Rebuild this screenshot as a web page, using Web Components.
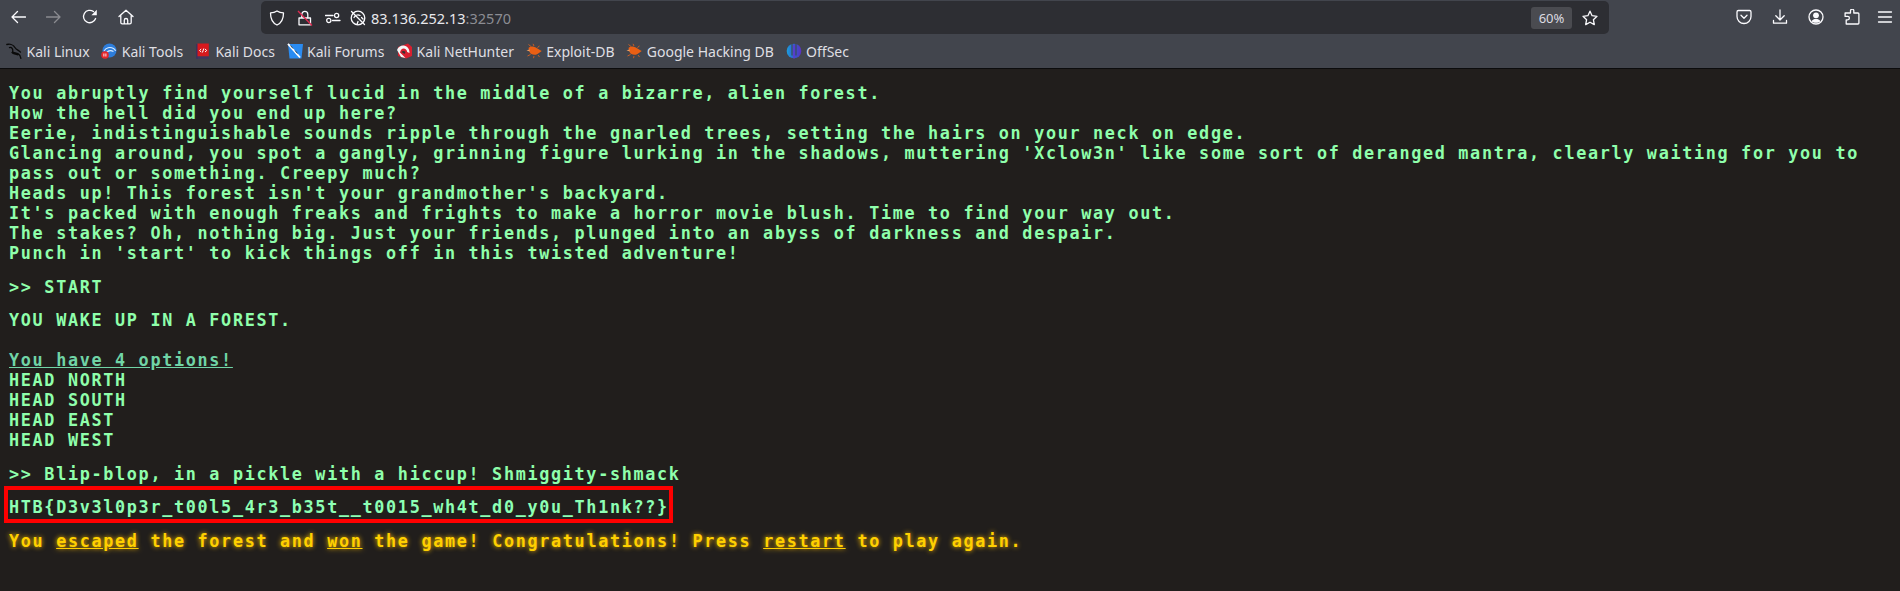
<!DOCTYPE html>
<html><head><meta charset="utf-8"><style>
html,body{margin:0;padding:0;background:#211e1c;height:100%;overflow:hidden}
body{display:flex;flex-direction:column;width:1900px;height:591px}
</style></head><body>
<browser-chrome></browser-chrome>
<game-terminal>
<term-block>You abruptly find yourself lucid in the middle of a bizarre, alien forest.<br>How the hell did you end up here?<br>Eerie, indistinguishable sounds ripple through the gnarled trees, setting the hairs on your neck on edge.<br>Glancing around, you spot a gangly, grinning figure lurking in the shadows, muttering 'Xclow3n' like some sort of deranged mantra, clearly waiting for you to pass out or something. Creepy much?<br>Heads up! This forest isn't your grandmother's backyard.<br>It's packed with enough freaks and frights to make a horror movie blush. Time to find your way out.<br>The stakes? Oh, nothing big. Just your friends, plunged into an abyss of darkness and despair.<br>Punch in 'start' to kick things off in this twisted adventure!</term-block>
<term-block style="margin-top:14px">&gt;&gt; START</term-block>
<term-block style="margin-top:13px">YOU WAKE UP IN A FOREST.</term-block>
<term-block style="margin-top:20px"><u style="color:#70d4a6">You have 4 options!</u><br>HEAD NORTH<br>HEAD SOUTH<br>HEAD EAST<br>HEAD WEST</term-block>
<term-block style="margin-top:14px">&gt;&gt; Blip-blop, in a pickle with a hiccup! Shmiggity-shmack</term-block>
<flag-box>HTB{D3v3l0p3r_t00l5_4r3_b35t__t0015_wh4t_d0_y0u_Th1nk??}</flag-box>
<term-block tone="win" style="margin-top:8px">You <u>escaped</u> the forest and <u>won</u> the game! Congratulations! Press <u>restart</u> to play again.</term-block>
</game-terminal>
<script>
const def=(name,html)=>customElements.define(name,class extends HTMLElement{constructor(){super();this.attachShadow({mode:'open'}).innerHTML=html(this);}});
const S='fill="none" stroke="currentColor" stroke-width="1.3" stroke-linecap="round" stroke-linejoin="round"';
const ICONS={
back:`<path ${S} d="M15.5 8H2M7.5 2.5 2 8l5.5 5.5"/>`,
forward:`<path ${S} d="M.5 8H14M8.5 2.5 14 8l-5.5 5.5"/>`,
reload:`<path ${S} d="M13.6 9.5A6.2 6.2 0 1 1 11.5 2.6"/><path fill="currentColor" d="M14.8.8v5.4H9.4z"/>`,
home:`<path ${S} d="M1 7.6 8 1.2l7 6.4M2.8 6.4v7c0 .9.6 1.400 1.400 1.400h7.600c.8 0 1.400-.5 1.400-1.400v-7M6.300 14.600v-3.400c0-1 .7-1.700 1.700-1.700s1.700.7 1.700 1.700v3.400"/>`,
shield:`<path ${S} d="M8 1C6 2.300 4 2.800 1.500 2.900c0 5.500 1.700 9.800 6.500 12.100 4.800-2.300 6.500-6.600 6.500-12.100C12 2.800 10 2.300 8 1z"/>`,
lock:`<path ${S} d="M2 8h11.500v6.800H2zM4.800 8V4.400A3 3 0 0 1 10.800 4.400V8"/><path stroke="#e22850" stroke-width="1.300" d="M1 1 15 15.500"/>`,
perm:`<path ${S} stroke-width="1.100" d="M.5 5.500H8M7.500 10.500H15"/><circle cx="11.600" cy="5.500" r="2.100" ${S} stroke-width="1.100"/><circle cx="3.800" cy="10.500" r="2.100" ${S} stroke-width="1.100"/>`,
track:`<circle cx="8" cy="8" r="6.800" ${S} stroke-width="1.200"/><path ${S} stroke-width="1.200" d="M1.500 1.500 14.500 14.500M4 7.500C5 5.500 7.500 4.300 10 5.500M8 11.500 7 14.500M11.500 7.500 13 9"/>`,
star:`<path ${S} d="m8 1.200 2.100 4.500 4.900.600-3.600 3.400.9 4.900L8 12.200l-4.300 2.400.9-4.900L1 6.300l4.900-.600z"/>`,
pocket:`<path ${S} d="M2.400 1.500h11.200c.8 0 1.400.6 1.400 1.400v4.600A7 7 0 0 1 1 7.500V2.900c0-.8.6-1.400 1.400-1.400z"/><path ${S} d="M5 6.300 8 9.200l3-2.900"/>`,
download:`<path ${S} d="M8 1v9.800M3.800 6.800 8 11l4.200-4.200M1.500 11.500v2.700h13v-2.700"/>`,
account:`<circle cx="8" cy="8" r="7" ${S}/><circle cx="8" cy="6.300" r="2.900" fill="currentColor"/><path fill="currentColor" d="M3.500 12.300c1-1.700 2.600-2.300 4.500-2.300s3.500.6 4.500 2.300c-2.400 2-6.600 2-9 0z"/>`,
ext:`<path ${S} d="M6.500 1.500a1.700 1.700 0 0 1 3.300 0V4h4.200c.5 0 .9.400.9.900v9.200c0 .5-.4.900-.9.900H2.200v-4.200h1.500a1.700 1.700 0 0 0 0-3.400H1.100V4h5.400z"/>`,
menu:`<path ${S} d="M1.500 3h13M1.500 8h13M1.500 13h13"/>`,
kali:`<path fill="none" stroke="#0a0a0a" stroke-width="1.300" stroke-linecap="round" d="M.8 1.500c3.200-.9 6.800.5 8.300 3.300 1 1.800 3.800 2.500 5.400 4.300M3.500 4.600c2.300-.8 3.600 1.800 3.200 3.500-.4 1.800 3.200 1.500 5.200 2.500 1.800 1 2.800 3 3 4.700M6 9.500c1 1.700 3.500 1.400 5.500 2.300"/>`,
tools:`<circle cx="8.500" cy="7.500" r="7" fill="#2d7ddb"/><path fill="none" stroke="#d9ecff" stroke-width="1.100" d="M3 8c2-3.500 6-4.500 9.500-2.500 1 .6 1.800 1.500 2 2.500M5.500 9.500c2-2 4.500-2.300 7-1"/><circle cx="4" cy="12" r="3.800" fill="#e5262a"/><path stroke="#fff" stroke-width=".9" d="M2.900 10.500v3M4.900 10.500v3"/>`,
docs:`<path fill="#3a2f62" d="M1.200 1h2v14.800h-2z"/><path fill="#d7191d" d="M2.500.5h11.300v13H2.500z"/><path fill="#43365f" d="M2.500 13.500h11.300v2.300H2.500z"/><path fill="none" stroke="#fff" stroke-width="1" d="M6.200 6 4.500 7.500 6.200 9M10 6l1.700 1.500L10 9M8.800 5.500 7.400 9.500"/>`,
forums:`<path fill="#2a8cf2" d="M1 1h15l-1.500 14.500H2.500z"/><path fill="none" stroke="#fff" stroke-width="1.800" d="M1 .8 13 14.500"/><path fill="none" stroke="#0d2233" stroke-width=".8" d="M3.500 2.500 6 5.500M8 7.500l2.500 3"/>`,
hunter:`<path fill="#d81f2f" d="M2 4 12 .5l4 3.500v9l-6 2.500L2 13z"/><path fill="#f5f5f5" d="M1 7c1.500-4 6-5.500 9.500-3.500 2.200 1.300 3 4 3 6.500l-2.300-1c-.3-2-1.700-3.500-3.700-3.500C6 5.500 4.500 7 4 9.500L9.500 15 5 14z"/><path fill="#333" d="M5.500 9c1-1.500 3-1.300 4 0l-1 2z"/>`,
bug:`<g stroke="#e9631c" stroke-width=".8" fill="none"><path d="M5 3.500 2.500 1.500M8 3 7 .8M4.500 11.500 1.500 13M8 13l-.5 2.200M12 12l1.500 2M11.500 4.500l2-1.500"/></g><path fill="#ea5f14" d="M2.500 5c1.200-1.600 4.600-2 6.800-.8 2.300 1.200 4.700 2.800 6.400 3.900-1.700.9-3.600 3.200-5.800 3.600-2.800.5-5.500-.5-6.300-2.600z"/><path fill="#f7a363" d="M.5 7.200 3.500 6.600l.3 1.800z"/>`,
offsec:`<defs><linearGradient id="o" x1="0" x2="1" y1="0" y2="0"><stop offset="0" stop-color="#1aa0df"/><stop offset=".5" stop-color="#2f5fcb"/><stop offset="1" stop-color="#5d2fc4"/></linearGradient></defs><circle cx="8" cy="8" r="7.300" fill="url(#o)"/><path stroke="#42454d" stroke-width="1.100" d="M6 .5v12M10 .5v12"/><path stroke="#6a2fd0" stroke-width="1.300" d="M8 2v13.500"/>`
};
const ic=(n,c='#fbfbfe',sz=16)=>`<svg width="${sz}" height="${sz}" viewBox="0 0 16 16" style="display:block;flex:none;color:${c}">${ICONS[n]}</svg>`;

def('tool-btn',h=>`<style>:host{display:flex;align-items:center;justify-content:center;width:${h.getAttribute('w')||36}px;height:34px;flex:none}</style>${ic(h.getAttribute('icon'),h.getAttribute('color')||'#fbfbfe')}`);

def('url-bar',()=>`<style>
:host{display:flex;align-items:center;flex:none;width:1348px;height:33px;margin-top:1px;background:#2d2e33;border-radius:5px;color:#fbfbfe;font:14.500px "Noto Sans",sans-serif;box-sizing:border-box;padding-left:8px}
.ic{display:flex;align-items:center;gap:12px;flex:none}
.ic :nth-child(4){margin-left:-3px}
.t{margin-left:5px;flex:1;white-space:nowrap;color:#e8e8ec}
.t span{color:#8c8d93}
.z{width:41px;height:22px;border-radius:3px;background:#4a4b50;color:#dcdce0;display:flex;align-items:center;justify-content:center;font-size:13px;flex:none}
.s{width:36px;display:flex;justify-content:center;margin-right:1px;flex:none}
</style><div class="ic">${ic('shield')}${ic('lock')}${ic('perm')}${ic('track')}</div>
<div class="t">83.136.252.13<span>:32570</span></div><div class="z">60%</div><div class="s">${ic('star')}</div>`);

def('bookmark-item',h=>`<style>:host{display:flex;align-items:center;gap:4.500px;flex:none;font:14px "Noto Sans",sans-serif;color:#dfdfe3;white-space:nowrap}</style>${ic(h.getAttribute('icon'))}<slot></slot>`);

def('browser-chrome',()=>`<style>
:host{display:block;flex:none;height:68px;background:#42454d;border-bottom:1px solid #0c0c0d;box-sizing:content-box}
.top{display:flex;align-items:flex-start;height:34px}
.nav{display:flex;width:261px;flex:none;box-sizing:border-box}
.right{display:flex;margin-left:auto;width:174px;flex:none;box-sizing:border-box}
.bm{display:flex;align-items:center;height:34px;gap:11.700px;padding-left:6px}
</style>
<div class="top"><div class="nav"><tool-btn icon="back"></tool-btn><tool-btn icon="forward" color="#8a8b90"></tool-btn><tool-btn icon="reload"></tool-btn><tool-btn icon="home" w="35"></tool-btn></div>
<url-bar></url-bar>
<div class="right"><tool-btn icon="pocket"></tool-btn><tool-btn icon="download"></tool-btn><tool-btn icon="account"></tool-btn><tool-btn icon="ext"></tool-btn><tool-btn icon="menu" w="30"></tool-btn></div></div>
<div class="bm"><bookmark-item icon="kali">Kali Linux</bookmark-item><bookmark-item icon="tools">Kali Tools</bookmark-item><bookmark-item icon="docs">Kali Docs</bookmark-item><bookmark-item icon="forums">Kali Forums</bookmark-item><bookmark-item icon="hunter">Kali NetHunter</bookmark-item><bookmark-item icon="bug">Exploit-DB</bookmark-item><bookmark-item icon="bug">Google Hacking DB</bookmark-item><bookmark-item icon="offsec">OffSec</bookmark-item></div>`);

def('game-terminal',()=>`<style>:host{display:block;flex:1;background:#211e1c;padding:14px 8px 0 9px;box-sizing:border-box;width:1900px;font:700 16.800px/20px "DejaVu Sans Mono",monospace;letter-spacing:1.680px;color:#8fffab}</style><slot></slot>`);

def('term-block',()=>`<style>:host{display:block}
:host([tone=win]){color:#ffd000;text-shadow:0 0 5px #ffbf00}
</style><slot></slot>`);

def('flag-box',()=>`<style>:host{display:block;margin:2px 0 0 -5px;width:669px;height:37px;box-sizing:border-box;border:4px solid #f00;padding:6.500px 0 0 1px;white-space:nowrap;color:#8dffb4}</style><slot></slot>`);
</script>
</body></html>
